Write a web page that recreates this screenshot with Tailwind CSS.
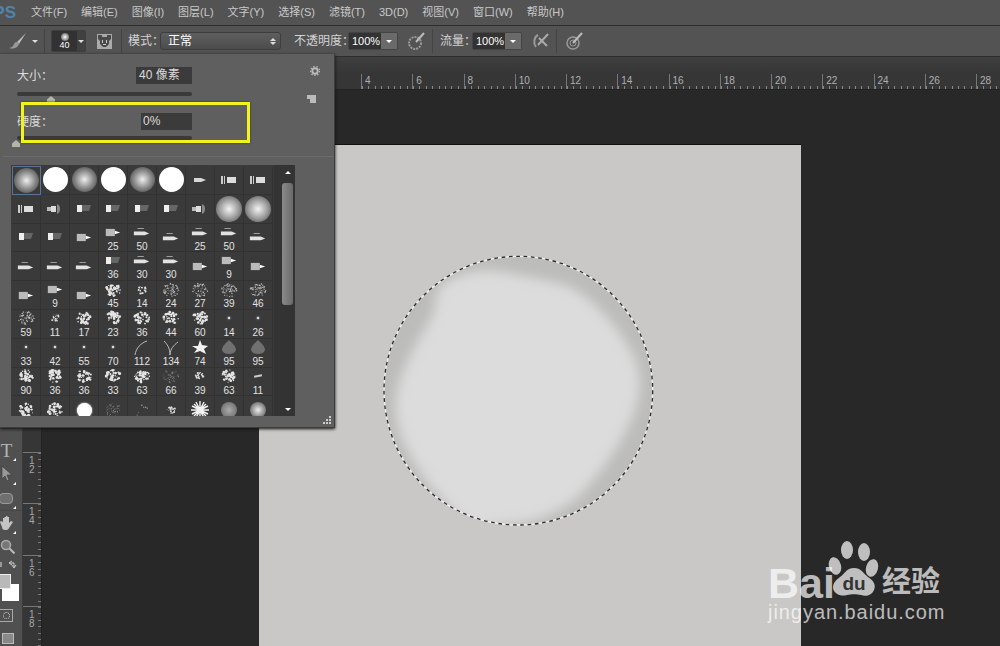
<!DOCTYPE html>
<html lang="zh">
<head>
<meta charset="utf-8">
<title>Photoshop</title>
<script src="https://cdn.jsdelivr.net/npm/@tailwindcss/browser@4"></script>
</head>
<body class="w-[1000px] h-[646px] overflow-hidden relative bg-[#282828] text-[#cfcfcf] text-[11px] font-['Liberation_Sans','Noto_Sans_CJK_SC',sans-serif]">

<!-- menu bar -->
<header class="h-[26px] bg-[#535353] border-b border-[#2e2e2e] flex items-center">
    <div class="w-[31px] overflow-hidden flex justify-end pr-[15px]"><span class="text-[17px] font-bold text-[#4f83ab] leading-none whitespace-nowrap">PS</span></div>
    <nav class="flex gap-[14px] text-[11px] text-[#c9c9c9]">
        <span>文件(F)</span><span>编辑(E)</span><span>图像(I)</span><span>图层(L)</span><span>文字(Y)</span><span>选择(S)</span><span>滤镜(T)</span><span>3D(D)</span><span>视图(V)</span><span>窗口(W)</span><span>帮助(H)</span>
    </nav>
</header>

<!-- options bar -->
<div class="h-[31px] bg-[#535353] border-b border-[#2e2e2e] flex items-center text-[12px] text-[#d4d4d4]">
    <svg class="ml-[8px] w-[20px] h-[20px]" viewBox="0 0 20 20"><path d="M18 2 9 11l2 2z" fill="#bbb"/><path d="M9 11c-3 0-3 3-4 4-1 1-3 2-4 2 3 1 8 1 10-4z" fill="#999"/></svg>
    <span class="ml-[4px] w-0 h-0 border-x-[3px] border-x-transparent border-t-[3px] border-t-[#ddd]"></span>
    <span class="ml-[6px] w-px h-[24px] bg-[#444]"></span>
    <div class="ml-[6px] w-[35px] h-[22px] flex bg-[#323232] rounded-[2px] border border-[#3f3f3f]">
        <div class="w-[25px] flex flex-col items-center text-[9px] leading-[9px] text-white pt-[2px]">
            <span class="size-[8px] rounded-full bg-[radial-gradient(circle,#fff_0%,#777_70%,#333_100%)]"></span>40
        </div>
        <div class="flex-1 bg-[#414141] flex items-center justify-center"><span class="w-0 h-0 border-x-[3px] border-x-transparent border-t-[3px] border-t-[#ddd]"></span></div>
    </div>
    <svg class="ml-[11px] w-[15px] h-[15px]" viewBox="0 0 15 15"><rect width="15" height="15" fill="#aaa"/><path d="M1 1h4v2h5V1h4v4l-2 2v3l-3 3H6l-3-3V7L1 5z" fill="#4a4a4a"/><path d="M5 6h1v3H5zM9 6h1v3H9zM6 10h3v1H6z" fill="#ccc"/></svg>
    <span class="ml-[9px] w-px h-[24px] bg-[#444]"></span>
    <span class="ml-[6px] w-[32px] whitespace-nowrap">模式：</span>
    <div class="w-[121px] h-[18px] rounded-[3px] border border-[#3d3d3d] bg-gradient-to-b from-[#5e5e5e] to-[#4c4c4c] flex items-center justify-between pl-[7px] pr-[4px] text-white">
        <span>正常</span>
        <span class="flex flex-col gap-[1px]"><span class="block w-0 h-0 border-x-[3px] border-x-transparent border-b-[3px] border-b-[#ddd]"></span><span class="block w-0 h-0 border-x-[3px] border-x-transparent border-t-[3px] border-t-[#ddd]"></span></span>
    </div>
    <span class="ml-[13px] w-[54px] whitespace-nowrap">不透明度：</span>
    <div class="w-[50px] h-[18px] flex rounded-[2px] border border-[#444]">
        <div class="w-[32px] bg-[#333] pl-[3px] text-[11px] leading-[16px] text-white">100%</div>
        <div class="flex-1 bg-[#6a6a6a] flex items-center justify-center"><span class="w-0 h-0 border-x-[3px] border-x-transparent border-t-[3px] border-t-white"></span></div>
    </div>
    <svg class="ml-[10px] w-[17px] h-[18px]" viewBox="0 0 17 18"><circle cx="7" cy="11" r="6" fill="none" stroke="#999" stroke-width="2" stroke-dasharray="2 1"/><path d="M16 1 8 10" stroke="#bbb" stroke-width="2"/></svg>
    <span class="ml-[7px] w-px h-[24px] bg-[#444]"></span>
    <span class="ml-[7px] w-[32px] whitespace-nowrap">流量：</span>
    <div class="w-[50px] h-[18px] flex rounded-[2px] border border-[#444]">
        <div class="w-[32px] bg-[#333] pl-[3px] text-[11px] leading-[16px] text-white">100%</div>
        <div class="flex-1 bg-[#6a6a6a] flex items-center justify-center"><span class="w-0 h-0 border-x-[3px] border-x-transparent border-t-[3px] border-t-white"></span></div>
    </div>
    <svg class="ml-[10px] w-[17px] h-[16px]" viewBox="0 0 17 16"><path d="M6 2C2 4 1 10 4 14" fill="none" stroke="#999" stroke-width="2"/><path d="M16 1 6 12M7 5l8 8" stroke="#aaa" stroke-width="2"/></svg>
    <span class="ml-[7px] w-px h-[24px] bg-[#444]"></span>
    <svg class="ml-[9px] w-[17px] h-[18px]" viewBox="0 0 17 18"><circle cx="7" cy="11" r="6" fill="none" stroke="#999" stroke-width="1.5"/><circle cx="7" cy="11" r="3" fill="none" stroke="#999"/><path d="M16 1 7 11" stroke="#bbb" stroke-width="2"/></svg>
</div>

<!-- strip above the ruler -->
<div class="h-[17px] bg-gradient-to-b from-[#3f3f3f] to-[#363636]"></div>

<!-- horizontal ruler -->
<div id="hruler" class="h-[16px] bg-[#363636] border-b border-[#222] flex pl-[361px] overflow-hidden"></div>

<div class="h-[556px] flex">
    <!-- tools -->
    <aside class="w-[23px] shrink-0 bg-[#505050] border-r border-[#3a3a3a] flex flex-col pt-[348px] text-[#b5b5b5]">
        <div class="h-[24px] w-full relative flex items-center justify-center pr-[9px] text-[19px] leading-none font-['Liberation_Serif',serif]">T<i class="absolute right-[6px] bottom-[1px] w-0 h-0 border-l-[3px] border-l-transparent border-b-[3px] border-b-white"></i></div>
        <div class="h-[24px] w-full relative flex items-center justify-center pr-[9px]">
            <svg class="w-[12px] h-[16px]" viewBox="0 0 12 16"><path d="M1 0v13l3-3 2 5 2-1-2-5h5z" fill="#999" stroke="#333" stroke-width=".6"/></svg>
            <i class="absolute right-[6px] bottom-[1px] w-0 h-0 border-l-[3px] border-l-transparent border-b-[3px] border-b-white"></i>
        </div>
        <div class="h-[24px] w-full relative flex items-center">
            <span class="block w-[14px] h-[11px] -ml-[1px] rounded-[4px] bg-[#6f6f6f] border border-[#999]"></span>
            <i class="absolute right-[6px] bottom-[1px] w-0 h-0 border-l-[3px] border-l-transparent border-b-[3px] border-b-white"></i>
        </div>
        <div class="h-[25px] w-full relative flex items-center border-t border-[#464646]">
            <svg class="w-[15px] h-[16px]" viewBox="0 0 15 16"><path d="M3 7V3h1.500v4-5H6v5V1h1.500v6-5H9v6l2-2 2 1-4 6c-1 2-2 2-4 2-2 0-3-1-3-3L0 7l1-1z" fill="#c4c4c4"/></svg>
            <i class="absolute right-[6px] bottom-[1px] w-0 h-0 border-l-[3px] border-l-transparent border-b-[3px] border-b-white"></i>
        </div>
        <div class="h-[22px] w-full flex items-center">
            <svg class="w-[15px] h-[15px]" viewBox="0 0 15 15"><circle cx="6" cy="6" r="4.500" fill="#777" stroke="#aaa" stroke-width="1.500"/><path d="m9.500 9.500 5 5" stroke="#bbb" stroke-width="2"/></svg>
        </div>
        <div class="h-[14px] w-full flex items-center justify-between">
            <span class="w-[2px] h-[5px] bg-[#999]"></span>
            <svg class="w-[9px] h-[9px] mr-[5px]" viewBox="0 0 9 9"><path d="M1 3h5v4M4 1 1 3l3 2M4 5l2 3 2-3" fill="none" stroke="#ccc"/></svg>
        </div>
        <div class="h-[29px] w-full relative">
            <span class="absolute left-[2px] top-[13px] size-[17px] bg-white"></span>
            <span class="absolute -left-[4px] top-[3px] size-[15px] bg-[#b9b9b9] border border-[#eee]"></span>
        </div>
        <div class="mt-[9px] h-[13px] w-[14px] -ml-[1px] border border-[#aaa] flex items-center justify-center">
            <span class="size-[7px] rounded-full border border-dotted border-[#ccc]"></span>
        </div>
        <div class="mt-[11px] h-[11px] w-[12px] ml-[2px] bg-[#888] border border-[#bbb]"></div>
    </aside>

    <!-- vertical ruler -->
    <div class="w-[19px] shrink-0 bg-[#363636] border-r border-[#222] pt-[362px] overflow-hidden">
        <div class="h-[51px] border-t border-[#777] bg-[repeating-linear-gradient(180deg,#777_0,#777_1px,transparent_1px,transparent_6.4px)] bg-no-repeat bg-right bg-[length:3px_100%] pl-[6px] pt-[3px] text-[10px] leading-[9px] text-[#a8a8a8]">1<br>2</div>
        <div class="h-[52px] border-t border-[#777] bg-[repeating-linear-gradient(180deg,#777_0,#777_1px,transparent_1px,transparent_6.4px)] bg-no-repeat bg-right bg-[length:3px_100%] pl-[6px] pt-[3px] text-[10px] leading-[9px] text-[#a8a8a8]">1<br>4</div>
        <div class="h-[51px] border-t border-[#777] bg-[repeating-linear-gradient(180deg,#777_0,#777_1px,transparent_1px,transparent_6.4px)] bg-no-repeat bg-right bg-[length:3px_100%] pl-[6px] pt-[3px] text-[10px] leading-[9px] text-[#a8a8a8]">1<br>6</div>
        <div class="h-[51px] border-t border-[#777] bg-[repeating-linear-gradient(180deg,#777_0,#777_1px,transparent_1px,transparent_6.4px)] bg-no-repeat bg-right bg-[length:3px_100%] pl-[6px] pt-[3px] text-[10px] leading-[9px] text-[#a8a8a8]">1<br>8</div>
    </div>

    <!-- canvas area -->
    <main class="flex-1 relative overflow-hidden bg-[#282828]">
        <div class="absolute left-[217px] top-[55px] w-[542px] h-[520px] bg-[#c9c8c6] shadow-[0_-1px_0_#111]">
            <svg class="absolute left-[111px] top-[100px] w-[300px] h-[290px]" viewBox="0 0 900 870">
                <defs>
                    <filter id="soft" x="-10%" y="-10%" width="120%" height="120%"><feGaussianBlur stdDeviation="17"/></filter>
                    <clipPath id="sel"><circle cx="445" cy="437" r="403"/></clipPath>
                </defs>
                <g clip-path="url(#sel)">
                    <rect width="900" height="870" fill="#bcbcba"/>
                    <path d="M205 130C250 90 310 70 385 78 440 90 520 100 600 125 680 170 740 240 790 330 815 390 815 440 790 510 760 580 720 650 640 740 590 790 540 810 480 830L300 850C220 770 150 700 100 590 75 530 70 470 85 420 110 340 150 280 190 205Z" fill="#dcdcdc" filter="url(#soft)"/>
                </g>
                <circle cx="445" cy="437" r="403" fill="none" stroke="#f1f1f1" stroke-width="4"/>
                <circle cx="445" cy="437" r="403" fill="none" stroke="#2c2c2c" stroke-width="4" stroke-dasharray="11 11"/>
            </svg>
        </div>
    </main>
</div>

<!-- brush preset panel -->
<section class="absolute left-0 top-[54px] w-[335px] h-[374px] bg-[#5f5f5f] border-r border-b border-[#3c3c3c] shadow-[0_1px_3px_#111] text-[#dcdcdc] text-[12px]">
    <div class="h-[102px] pl-[17px] pt-[13px] relative">
        <div class="w-[175px] h-[17px] flex items-center justify-between">
            <span>大小：</span>
            <span class="w-[56px] h-[17px] bg-[#3b3b3b] pl-[3px] leading-[17px]">40 像素</span>
        </div>
        <div class="mt-[8px] w-[175px] h-[4px] rounded-sm bg-[#3a3a3a] relative">
            <span class="absolute left-[30px] top-[4px] w-[8px] h-[7px] bg-[#b5b5a8] [clip-path:polygon(50%_0,100%_50%,100%_100%,0_100%,0_50%)]"></span>
        </div>
        <svg class="absolute left-[310px] top-[12px] w-[10px] h-[10px]" viewBox="0 0 11 11"><circle cx="5.500" cy="5.500" r="3" fill="none" stroke="#bbb" stroke-width="2"/><circle cx="5.500" cy="5.500" r="5" fill="none" stroke="#bbb" stroke-width="1.500" stroke-dasharray="1.500 2"/></svg>
        <svg class="absolute left-[307px] top-[40px] w-[9px] h-[9px]" viewBox="0 0 9 9"><path d="M0 1h9v8H3V5H0z" fill="#bbb"/></svg>
        <div class="mt-[17px] w-[175px] h-[17px] flex items-center justify-between">
            <span>硬度：</span>
            <span class="w-[51px] h-[17px] bg-[#3b3b3b] pl-[2px] leading-[17px]">0%</span>
        </div>
        <div class="mt-[6px] w-[175px] h-[4px] rounded-sm bg-[#3a3a3a] relative">
            <span class="absolute -left-[5px] top-[4px] w-[8px] h-[7px] bg-[#b5b5a8] [clip-path:polygon(50%_0,100%_50%,100%_100%,0_100%,0_50%)]"></span>
        </div>
    </div>
    <div class="ml-[3px] h-px bg-[#454545] border-b border-[#6b6b6b]"></div>
    <div class="ml-[11px] mt-[8px] w-[284px] h-[251px] bg-[#3a3a3a] flex">
        <div id="brushes" class="w-[262px] h-[251px] pl-px pt-px grid grid-cols-[repeat(9,29px)] grid-rows-[repeat(9,28.8px)] overflow-hidden"></div>
        <div class="ml-[1px] flex-1 bg-[#333] relative flex justify-center pl-[6px]">
            <span class="absolute top-[6px] w-0 h-0 border-x-[3px] border-x-transparent border-b-[3px] border-b-white"></span>
            <span class="absolute top-[18px] w-[11px] h-[122px] rounded-[3px] bg-gradient-to-r from-[#8a8a8a] to-[#6a6a6a]"></span>
            <span class="absolute bottom-[5px] w-0 h-0 border-x-[3px] border-x-transparent border-t-[3px] border-t-white"></span>
        </div>
    </div>
    <svg class="absolute right-[3px] bottom-[3px] w-[8px] h-[8px]" viewBox="0 0 8 8"><path d="M6 0h2v2H6zM3 3h2v2H3zM6 3h2v2H6zM0 6h2v2H0zM3 6h2v2H3zM6 6h2v2H6z" fill="#ccc"/></svg>

    <!-- annotation box -->
    <div class="absolute left-[21px] top-[48px] w-[229px] h-[41px] border-[3px] border-[#f2f21c] shadow-[0_0_2px_#333]"></div>
</section>

<!-- watermark -->
<div class="absolute left-[768px] top-[540px] w-[180px] h-[90px] text-white/70 pointer-events-none">
    <span class="absolute left-0 top-[26px] text-[43px] leading-[34px] font-bold font-['Liberation_Sans',sans-serif]">Bai</span>
    <svg class="absolute left-[60px] top-0 w-[54px] h-[58px]" viewBox="0 0 54 58">
        <ellipse cx="19" cy="10" rx="6" ry="9" fill="#fff" fill-opacity=".7"/><ellipse cx="36" cy="12" rx="6" ry="9" fill="#fff" fill-opacity=".7"/>
        <ellipse cx="7" cy="26" rx="6" ry="9" fill="#fff" fill-opacity=".7" transform="rotate(-15 7 26)"/><ellipse cx="44" cy="28" rx="6" ry="9" fill="#fff" fill-opacity=".7" transform="rotate(15 44 28)"/>
        <path d="M26 28c7 0 9 5 14 9 6 4 8 8 6 13-2 5-8 7-13 5-4-1-10-1-14 0-6 2-13-1-14-7 0-5 3-8 7-11 5-3 6-9 14-9z" fill="#fff" fill-opacity=".7"/>
        <text x="26" y="50" text-anchor="middle" font-family="Liberation Sans" font-weight="700" font-size="19" fill="#333">du</text>
    </svg>
    <span class="absolute left-[114px] top-[25px] text-[29px] leading-[34px] font-bold whitespace-nowrap">经验</span>
    <span class="absolute left-0 top-[60px] text-[20px] leading-[24px] tracking-[0.95px] whitespace-nowrap font-['Liberation_Sans',sans-serif]">jingyan.baidu.com</span>
</div>

<script>
    // ruler cells, 51.25px per 2cm
    let rulerHtml = '';
    for (let n = 4; n <= 28; n += 2) {
        rulerHtml += `<div class="w-[51.25px] shrink-0 relative border-l border-[#777] pl-[3px] text-[10px] leading-[13px] text-[#b0b0b0]">${n}
            <i class="absolute left-0 right-0 bottom-0 h-[3px] bg-[repeating-linear-gradient(90deg,#888_0,#888_1px,transparent_1px,transparent_6.4px)]"></i></div>`;
    }
    document.getElementById('hruler').innerHTML = rulerHtml;

    let seed = 7;
    const rnd = () => {
        seed = (seed * 16807) % 2147483647;
        return seed / 2147483647;
    };

    const tip = (kind) => {
        if (kind == 'a') return '<svg width="20" height="10" viewBox="0 0 20 10"><path d="M4 3h7l5 2-5 2H4z" fill="#d8d8d8"/></svg>';
        if (kind == 'b') return '<svg width="20" height="10" viewBox="0 0 20 10"><path d="M2 1h2v8H2zM5 1h1v8H5z" fill="#ccc"/><rect x="8" y="2" width="9" height="6" fill="#ddd"/></svg>';
        if (kind == 'c') return '<svg width="20" height="12" viewBox="0 0 20 12"><rect x="3" y="2" width="5" height="7" fill="#eee"/><path d="M8 2h9l-2 6H8z" fill="#666"/></svg>';
        if (kind == 'd') return '<svg width="20" height="12" viewBox="0 0 20 12"><rect x="2" y="4" width="4" height="4" fill="#bbb"/><rect x="6" y="3" width="5" height="6" fill="#ddd"/><path d="M12 1c4 1 4 9 0 10z" fill="#888"/></svg>';
        if (kind == 'e') return '<svg width="18" height="9" viewBox="0 0 20 10"><rect x="2" y="1" width="10" height="8" fill="#bbb"/><path d="M12 3l6 2-6 2z" fill="#fff"/></svg>';
        return '<svg width="18" height="11" viewBox="0 0 20 12"><path d="M5 1h7v1H5z" fill="#aaa"/><path d="M1 5h12l5 2-5 2H1z" fill="#e2e2e2"/></svg>';
    };

    const spatter = (count, spread, size, fill) => {
        let dots = '';
        for (let i = 0; i < count; i++) {
            let a = rnd() * 6.283, d = Math.sqrt(rnd()) * spread;
            dots += `<circle cx="${(12 + Math.cos(a) * d).toFixed(1)}" cy="${(11 + Math.sin(a) * d * 0.85).toFixed(1)}" r="${(size * (0.5 + rnd())).toFixed(1)}" fill="${fill}"/>`;
        }
        return `<svg width="24" height="22" viewBox="0 0 24 22">${dots}</svg>`;
    };

    const glyph = (type) => {
        if (type == 's') return '<span class="block size-[25px] rounded-full bg-[radial-gradient(circle,#eee_0%,#8a8a8a_50%,#4a4a4a_85%,#3a3a3a_100%)]"></span>';
        if (type == 'S') return '<span class="block size-[26px] rounded-full bg-[radial-gradient(circle,#f4f4f4_0%,#a0a0a0_50%,#555_90%,#3a3a3a_100%)]"></span>';
        if (type == 'h') return '<span class="block size-[25px] rounded-full bg-white"></span>';
        if (type == 'H') return '<span class="block size-[15px] rounded-full bg-white shadow-[0_0_2px_#fff]"></span>';
        if (type == 'g') return '<span class="block size-[16px] rounded-full bg-[radial-gradient(circle,#eee_0%,#888_60%,#444_100%)]"></span>';
        if (type == 'x') return spatter(80, 8, 0.5, '#bbb');
        if (type == 'w') return spatter(44, 7.5, 0.95, '#e4e4e4');
        if (type == 'q') return spatter(24, 4.5, 0.7, '#ddd');
        if (type == 'n') return spatter(60, 8, 0.4, '#888');
        if (type == 'o') return spatter(6, 8, 0.5, '#aaa');
        if (type == 'p') return '<span class="block size-[2px] bg-[#ddd] shadow-[0_0_2px_#fff]"></span>';
        if (type == 'l') return '<svg width="18" height="15" viewBox="0 0 18 15"><path d="M2 15C3 8 8 3 14 1" fill="none" stroke="#bbb"/></svg>';
        if (type == 'y') return '<svg width="18" height="15" viewBox="0 0 18 15"><path d="M8 15C8 8 5 4 2 1M8 15c0-6 4-10 8-13" fill="none" stroke="#bbb"/></svg>';
        if (type == 'm') return '<svg width="16" height="15" viewBox="0 0 16 15"><path d="M8 0l2 5 6 1-4 3 2 5-6-3-6 2 3-4-5-3h6z" fill="#f2f2f2"/></svg>';
        if (type == 'f') return '<svg width="16" height="14" viewBox="0 0 16 14"><path d="M8 0c3 3 7 6 7 10-1 3-4 4-7 4s-6-1-7-4c0-4 4-7 7-10z" fill="#707070"/></svg>';
        if (type == 'D') return '<span class="block w-[8px] h-[2px] -rotate-12 bg-[#ccc]"></span>';
        if (type == 'r') return '<svg width="18" height="18" viewBox="0 0 18 18"><path d="M9 0v18M0 9h18M3 3l12 12M15 3 3 15M5 1l8 16M13 1 5 17M1 5l16 8M17 5 1 13" stroke="#f2f2f2" stroke-width="1.400"/></svg>';
        if (type == 'C') return '<span class="block size-[16px] rounded-full bg-[radial-gradient(circle,#aaa_0%,#777_70%,#555_100%)]"></span>';
        return tip(type);
    };

    // glyph:label for every preset, row by row
    const presets = [
        's h s h s h a b b',
        'b d c c c c d S S',
        'c c e e:25 t:50 t t:25 t:50 t',
        't t t c:36 t:30 t:30 e e:9 e',
        'e e:9 e w:45 q:14 x:24 x:27 x:39 x:46',
        'x:59 q:11 w:17 w:23 w:36 w:44 w:60 p:14 p:26',
        'p:33 p:42 p:55 p:70 l:112 y:134 m:74 f:95 f:95',
        'w:90 w:36 w:36 w:33 w:63 n:66 q:39 w:63 D:11',
        'w w H n o q r C g'
    ];

    let brushHtml = '';
    presets.forEach((row, r) => {
        row.split(' ').forEach((item, c) => {
            let [type, label] = item.split(':');
            let selected = r == 0 && c == 0 ? 'border border-[#5b7396]' : 'border-r border-b border-[#323232]';
            let place = label ? 'justify-start' : 'justify-center';
            brushHtml += `<div class="flex flex-col items-center overflow-hidden ${place} ${selected}">
                ${label ? `<div class="h-[17px] shrink-0 flex items-center">${glyph(type)}</div><span class="relative text-[10px] leading-[11px] text-[#e2e2e2]">${label}</span>` : glyph(type)}
            </div>`;
        });
    });
    document.getElementById('brushes').innerHTML = brushHtml;
</script>
</body>
</html>
